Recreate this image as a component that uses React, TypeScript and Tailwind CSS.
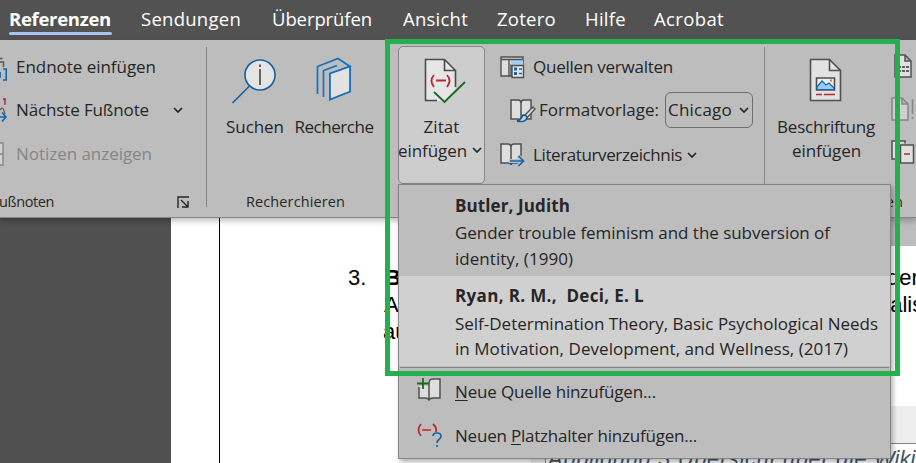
import { useLayoutEffect, useRef, useState, type ReactNode } from "react";

type LabelProps = { text: string; width: number; className?: string; children?: ReactNode };

/** Single line of text whose tracking is adjusted so that it spans the given width. */
function Label({ text, width, className = "", children }: LabelProps) {
  const ref = useRef<HTMLSpanElement>(null);
  const [spacing, setSpacing] = useState(0);
  useLayoutEffect(() => {
    const el = ref.current;
    if (!el) return;
    el.style.letterSpacing = "0px";
    const value = (width - el.getBoundingClientRect().width) / text.length;
    el.style.letterSpacing = `${value}px`;
    setSpacing(value);
  }, [text, width]);
  return (
    <span ref={ref} className={`inline-block shrink-0 whitespace-pre ${className}`} style={{ letterSpacing: spacing }}>
      {children ?? text}
    </span>
  );
}

function Chevron({ className = "" }: { className?: string }) {
  return (
    <svg className={`h-[6px] w-[10px] shrink-0 ${className}`} viewBox="0 0 10 6" fill="none" stroke="#262626" strokeWidth="1.7">
      <path d="M1 1l4 4 4-4" />
    </svg>
  );
}

const tabs = [
  { text: "Sendungen", width: 100, gap: "ml-[29px]" },
  { text: "Überprüfen", width: 100, gap: "ml-[31px]" },
  { text: "Ansicht", width: 65, gap: "ml-[31px]" },
  { text: "Zotero", width: 59, gap: "ml-[29px]" },
  { text: "Hilfe", width: 41, gap: "ml-[29px]" },
  { text: "Acrobat", width: 70, gap: "ml-[28px]" },
];

function TabBar() {
  return (
    <nav className="flex h-10 items-start bg-[#525252] pl-2 text-[18.5px] leading-[38px] text-white">
      <div className="flex w-[104px] flex-col items-center">
        <Label text="Referenzen" width={102} className="h-8 font-bold" />
        <div className="h-[3px] w-[103px] rounded-sm bg-[#a9c1f3]" />
      </div>
      {tabs.map((t) => (
        <Label key={t.text} text={t.text} width={t.width} className={t.gap} />
      ))}
    </nav>
  );
}

function FootnoteGroup() {
  return (
    <section className="flex w-[207px] shrink-0 flex-col">
      <div className="flex h-[160px] border-r border-[#858585]">
        <div className="flex flex-1 flex-col">
          <div className="flex h-[40px] shrink-0 items-center">
            <svg className="mt-1 h-6 w-4" viewBox="0 0 16 24" fill="none">
              <path d="M0 1.500h2.500M0 5h3.500v5" stroke="#555" strokeWidth="1.4" />
              <path d="M3 12h3.200v11H3" stroke="#1267b4" strokeWidth="1.6" />
              <path d="M0 15v6" stroke="#1267b4" strokeWidth="1.8" />
            </svg>
            <Label text="Endnote einfügen" width={140} />
          </div>
          <div className="flex h-[46px] shrink-0 items-center">
            <svg className="h-6 w-4" viewBox="0 0 16 24" fill="none">
              <path d="M3 1.5l2-.8v6" stroke="#b52a31" strokeWidth="1.5" />
              <path d="M0 12q3-4 4 1l1 3" stroke="#555" strokeWidth="1.2" />
              <path d="M0 19h6M2 14.5l4 4.5-4 4.5" stroke="#1267b4" strokeWidth="1.6" />
            </svg>
            <Label text="Nächste Fußnote" width={133} />
            <Chevron className="ml-6" />
          </div>
          <div className="flex h-[41px] shrink-0 items-center text-[#868686]">
            <svg className="h-6 w-4" viewBox="0 0 16 24" fill="#d2d2d2" stroke="#858585" strokeWidth="1.4">
              <path d="M-2 1h5v22h-5M-2 12h5" />
            </svg>
            <Label text="Notizen anzeigen" width={136} />
          </div>
          <div className="flex h-[35px] shrink-0 items-center justify-between pt-[20px] text-[14.5px]">
            <Label text="Fußnoten" width={62} className="-ml-[8px]" />
            <svg className="mr-[17px] h-3 w-3" viewBox="0 0 12 12" fill="none" stroke="#262626" strokeWidth="1.4">
              <path d="M1 12V1h11M4 4l7 7M11 5v6H5" />
            </svg>
          </div>
        </div>
      </div>
    </section>
  );
}

function ResearchGroup() {
  return (
    <section className="flex w-[191px] shrink-0 flex-col">
      <div className="flex h-[143px] shrink-0">
        <div className="flex w-[78px] flex-col items-end">
          <svg className="mr-2 mt-[10px] h-[48px] w-[46px]" viewBox="0 0 46 48" fill="none" stroke="#15609f" strokeWidth="1.6">
            <circle cx="29" cy="18" r="15" fill="#e4e4e4" />
            <path d="M18.500 29L1.500 46" />
            <path d="M29 12v16M29 7.500v2.500" stroke="#444" />
          </svg>
          <Label text="Suchen" width={58} className="mr-[1px] mt-[10px] leading-6" />
        </div>
        <div className="ml-[9px] flex w-20 flex-col items-center">
          <svg className="mt-[10px] h-[46px] w-[36px]" viewBox="0 0 36 46" fill="none" stroke="#1670c0" strokeWidth="1.7">
            <path d="M1.500 37V9.500L22 1.500l12 8L14 16.500v26l20-8v-25" />
            <path d="M14 16.500l20-7v25l-20 8z" fill="#e2e2e2" />
            <path d="M7.500 40V13.500L21 8.500" />
          </svg>
          <Label text="Recherche" width={79} className="mt-[12px] leading-6" />
        </div>
      </div>
      <Label text="Recherchieren" width={99} className="ml-[39px] self-start text-[14.5px] leading-6" />
    </section>
  );
}

function OpenBook() {
  return (
    <path d="M1 2h7q3 0 3 3 0-3 3-3h7v19h-7q-3 0-3 2 0-2-3-2H1zM11 5v17" fill="#dedede" stroke="#505050" strokeWidth="1.5" />
  );
}

function CitationGroup() {
  return (
    <section className="flex w-[367px] shrink-0">
      <button className="mt-[-1px] flex h-[138px] w-[87px] shrink-0 flex-col items-center rounded-[5px] border border-[#858585] bg-[#cdcdcd]">
        <svg className="ml-[7px] mt-[11px] h-[46px] w-[42px]" viewBox="0 0 42 46" fill="none">
          <path d="M1.500 1.500h19l11 11V31L20 43H1.500z" fill="#e6e6e6" />
          <path d="M13 42.500H1.500v-41h19l11 11V29M20.500 1.500v11h11" stroke="#4b4b4b" strokeWidth="1.6" />
          <path d="M10 17q-5 5.500 0 12M23 17q5 5.500 0 12M12 22.500h10" stroke="#b52a31" strokeWidth="1.8" />
          <path d="M10 34l10.500 10L41 24" stroke="#1b6a20" strokeWidth="1.8" />
        </svg>
        <Label text="Zitat" width={36} className="mt-[11px] leading-6" />
        <span className="flex items-center leading-6">
          <Label text="einfügen" width={69} className="-ml-[3px]" />
          <Chevron className="-mt-[3px] ml-[5px]" />
        </span>
      </button>
      <div className="flex h-[160px] flex-1 flex-col border-r border-[#858585] pl-[15px]">
        <div className="flex h-[40px] items-center">
          <svg className="mr-[8px] h-[24px] w-[25px]" viewBox="0 0 25 24" fill="none" stroke="#505050" strokeWidth="1.4">
            <path d="M1 2h22v8H11v11H1z" fill="#dedede" />
            <path d="M11 5h12v5H11z" fill="#a8d0f2" stroke="none" />
            <path d="M1 4.500h22M9 5v16" />
            <path d="M12 10.500h11.500v12H12z" fill="#e4e4e4" />
            <path d="M14 14h3M14 18.500h3" stroke="#1267b4" strokeWidth="3" />
            <path d="M19 14h3M19 18.500h3" stroke="#1267b4" />
          </svg>
          <Label text="Quellen verwalten" width={140} />
        </div>
        <div className="flex h-[46px] items-center pl-[10px]">
          <svg className="mr-[3px] h-[25px] w-[26px]" viewBox="0 0 26 25">
            <OpenBook />
            <path d="M23 9l2 2-9 10-3-2z" fill="#ddd" stroke="#505050" strokeWidth="1.3" />
            <path d="M13 17q4 0 4 3-2 5-10 3 4-1 6-6z" fill="#b7d7f0" stroke="#15558f" strokeWidth="1.5" />
          </svg>
          <Label text="Formatvorlage:" width={120} />
          <button className="ml-[6px] flex h-9 w-[88px] items-center rounded-[6px] border border-[#6f6f6f] pl-[2px]">
            <Label text="Chicago" width={64} />
            <Chevron className="ml-[7px]" />
          </button>
        </div>
        <div className="flex h-[43px] items-center">
          <svg className="mr-[8px] h-[25px] w-[25px]" viewBox="0 0 25 25">
            <OpenBook />
            <path d="M9 19h15M18 14l6 5-6 5" fill="none" stroke="#bdbdbd" strokeWidth="4" />
            <path d="M10 19h14M18.500 14l5 5-5 5" fill="none" stroke="#1267b4" strokeWidth="1.700" />
          </svg>
          <Label text="Literaturverzeichnis" width={149} />
          <Chevron className="ml-[5px]" />
        </div>
      </div>
    </section>
  );
}

function CaptionGroup() {
  return (
    <section className="flex w-[151px] shrink-0 flex-col overflow-hidden">
      <div className="flex h-[143px] shrink-0">
        <div className="flex w-[122px] shrink-0 flex-col items-center">
          <svg className="mt-[11px] h-[44px] w-[34px]" viewBox="0 0 34 44" fill="none" stroke="#505050" strokeWidth="1.6">
            <path d="M1.500 1.500h19l11 11v30h-30z" fill="#e2e2e2" />
            <path d="M20.500 1.500v11h11" />
            <path d="M7.500 20h18v12h-18z" fill="#eee" />
            <path d="M8 29l5-6 4 4 3-2 5 5v1.500H8z" fill="#9bcbf3" stroke="#1267b4" strokeWidth="1.2" />
            <path d="M21 22.500h2" stroke="#d77a1c" strokeWidth="2" />
            <path d="M7 36.500h6M15 36.500h11" stroke="#b52a31" />
          </svg>
          <Label text="Beschriftung" width={98} className="mt-[13px] leading-6" />
          <Label text="einfügen" width={69} className="ml-[1px] leading-6" />
        </div>
        <div className="ml-1 flex flex-col">
          <svg className="ml-[3px] mt-[7px] h-[24px] w-[18px]" viewBox="0 0 18 24" fill="#e0e0e0" stroke="#505050" strokeWidth="1.5">
            <path d="M1 1h10l6 6v16H1zM11 1v6h6" />
            <path d="M4 13h12M4 17h12" stroke="#333" strokeDasharray="3 1" />
          </svg>
          <svg className="mt-[19px] h-[24px] w-[24px]" viewBox="0 0 24 24" fill="#cfcfcf" stroke="#858585" strokeWidth="1.5">
            <path d="M1 1h10l6 6v16H1zM11 1v6h6M21.500 2v15M21.500 20v2" />
          </svg>
          <svg className="mt-[19px] h-[24px] w-[24px]" viewBox="0 0 24 24" fill="#e0e0e0" stroke="#505050" strokeWidth="1.5">
            <path d="M1 1h13v18H1z" />
            <path d="M7 3.500h9v18H7z" fill="#bdbdbd" stroke="none" />
            <path d="M9.500 5h13v18h-13z" />
            <path d="M13 14h6" stroke="#b52a31" />
          </svg>
        </div>
      </div>
      <Label text="Beschriftungen" width={104} className="ml-[34px] self-start text-[14.5px] leading-6" />
    </section>
  );
}

function CitationMenu() {
  return (
    <div className="absolute left-[398px] top-[184px] flex h-[275px] w-[493px] flex-col border border-[#858585] bg-[#bdbdbd] shadow-[2px_3px_5px_rgba(0,0,0,0.3)]">
      <div className="flex h-[91px] flex-col items-start pl-14 pt-[8px] leading-[25px]">
        <Label text="Butler, Judith" width={115} className="mb-[2px] font-bold" />
        <Label text="Gender trouble feminism and the subversion of" width={375} />
        <Label text="identity, (1990)" width={118} className="mt-px" />
      </div>
      <div className="flex h-[90px] flex-col items-start bg-[#d0d0d0] pl-14 pt-[7px] leading-[25px]">
        <Label text="Ryan, R. M.,  Deci, E. L" width={189} className="mb-[3px] font-bold" />
        <Label text="Self-Determination Theory, Basic Psychological Needs" width={423} />
        <Label text="in Motivation, Development, and Wellness, (2017)" width={393} />
      </div>
      <div className="mx-[1px] mt-[1px] h-px shrink-0 bg-[#858585]" />
      <div className="flex h-[48px] items-center pl-[18px]">
        <svg className="mb-[6px] mr-[14px] h-[24px] w-[24px]" viewBox="0 0 24 24" fill="none">
          <path d="M2 9h9V5q1-3 5-3h7v19h-7l-4 2-4-2H2z" fill="#dedede" />
          <path d="M2 10v11h6q3 0 4 2 1-2 4-2h7V2h-7q-4 0-4 4v16" stroke="#505050" strokeWidth="1.5" />
          <path d="M6 1v11M0 6.500h12" stroke="#1b6a20" strokeWidth="1.800" />
        </svg>
        <Label text="Neue Quelle hinzufügen..." width={201}>
          <span className="underline underline-offset-2">N</span>eue Quelle hinzufügen...
        </Label>
      </div>
      <div className="flex h-[40px] items-center pl-[18px]">
        <svg className="mr-[13px] mt-[-3px] h-[26px] w-[25px]" viewBox="0 0 25 26" fill="none" strokeWidth="1.7">
          <path d="M4 2Q-1 8 4 14M16 2q4 3 3 8M5 8h9" stroke="#b52a31" />
          <path d="M16 14q0-3 4-3 4 0 4 3 0 2-2 3.500-2 1.300-2 3.500M20 23v2" stroke="#1267a8" />
        </svg>
        <Label text="Neuen Platzhalter hinzufügen..." width={242}>
          Neuen <span className="underline underline-offset-2">P</span>latzhalter hinzufügen...
        </Label>
      </div>
    </div>
  );
}

function DocumentPage() {
  return (
    <main className="flex h-[245px] font-['Liberation_Sans',Arial,sans-serif] text-[22px] leading-[27px] text-black">
      <div className="w-[171px] shrink-0 bg-[#505050]" />
      <div className="w-[49px] shrink-0 border-r border-black bg-white" />
      <div className="flex flex-1 flex-col overflow-hidden bg-white">
        <div className="ml-auto h-[28px] w-[100px] shrink-0 bg-[#bdbdbd]" />
        <div className="flex pl-[128px] pt-[18px]">
          <span className="w-[37px] shrink-0">3.</span>
          <span className="w-[502px] shrink-0 font-bold">B</span>
          <span>der</span>
        </div>
        <div className="flex pl-[164px]">
          <span className="w-[494px] shrink-0">A</span>
          <span>ualis</span>
        </div>
        <div className="pl-[163px]">au</div>
        <div className="ml-[311px] mt-[61px] h-[37px] shrink-0 bg-[#eeeeee]" />
        <div className="ml-[311px] flex flex-1 bg-[#eeeeee] pl-[14px]">
          <div className="flex flex-1 items-start border-l border-t border-[#858585] bg-white pl-[2px] pt-px italic text-[#44546a]">
            <Label text="Abbildung 3 Übersicht über die " width={326} />
            <span>Wikinger</span>
          </div>
        </div>
      </div>
    </main>
  );
}

export default function App() {
  return (
    <div className="relative h-[463px] w-[916px] overflow-hidden bg-white font-['Open_Sans','Noto_Sans',sans-serif] text-[17px] text-[#262626]">
      <TabBar />
      <div className="relative flex h-[178px] overflow-visible border-b border-[#858585] bg-[#bdbdbd] pt-[7px] shadow-[0_3px_6px_rgba(0,0,0,0.25)]">
        <FootnoteGroup />
        <ResearchGroup />
        <CitationGroup />
        <CaptionGroup />
      </div>
      <DocumentPage />
      <CitationMenu />
      <div className="pointer-events-none absolute left-[385px] top-[39px] h-[337px] w-[515px] border-[5px] border-[#22b14c]" />
    </div>
  );
}
